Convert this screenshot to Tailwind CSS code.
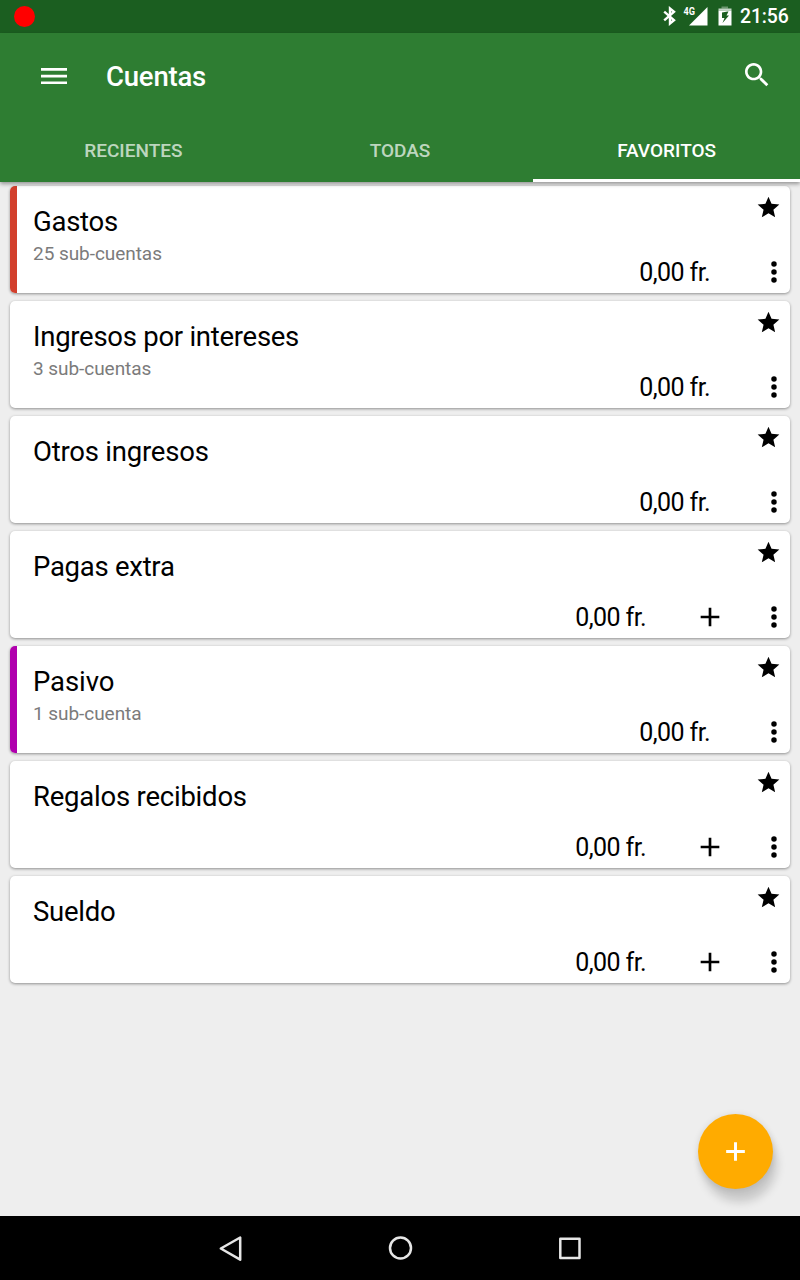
<!DOCTYPE html>
<html lang="es">
<head>
<meta charset="utf-8">
<title>Cuentas</title>
<script src="https://cdn.jsdelivr.net/npm/@tailwindcss/browser@4"></script>
</head>
<body class="w-[800px] h-[1280px] overflow-hidden bg-[#eeeeee] font-[Roboto,sans-serif] text-black">
<svg class="hidden">
  <symbol id="star" viewBox="-0.45 0.45 24 24"><path d="M12 17.27L18.18 21l-1.64-7.03L22 9.24l-7.19-.61L12 2 9.19 8.63 2 9.24l5.46 4.73L5.82 21z"/></symbol>
  <symbol id="more" viewBox="0 0 24 24"><circle cx="12" cy="6" r="2.05"/><circle cx="12" cy="12" r="2.05"/><circle cx="12" cy="18" r="2.05"/></symbol>
  <symbol id="plus" viewBox="0 0 24 24"><path d="M19 13h-6v6h-2v-6H5v-2h6V5h2v6h6z"/></symbol>
</svg>
<div class="flex flex-col h-full">
  <div class="h-[33px] shrink-0 bg-[#1b5e20] flex items-center justify-between pl-[13.5px] pr-[11px]">
    <div class="size-[21px] rounded-full bg-[#ff0000]"></div>
    <div class="flex items-center text-white">
      <svg class="w-[14px] h-[20px] mb-px" viewBox="0 0 14 20" fill="none" stroke="#fff" stroke-width="2.4"><path d="M1.200 5.700L11 14.200 7 17.500V2.500l4 3.300-9.800 8.500"/></svg>
      <svg class="w-[25px] h-[22px] ml-[6px] mb-px" viewBox="0 0 25 22"><path d="M24.500 2v18.500H6z" fill="#fff"/><text x="0.500" y="10.300" font-size="11" font-weight="700" textLength="11.500" lengthAdjust="spacingAndGlyphs" fill="#fff">4G</text></svg>
      <svg class="w-[14px] h-[20px] ml-[10px] mb-px" viewBox="0 0 14 20"><path d="M3.500 0.500h6.500v2h-6.500z" fill="#fff" opacity=".35"/><path d="M.5 2.500h13v2h-13z" fill="#fff" opacity=".75"/><path fill-rule="evenodd" d="M.5 4.500h13V19.500H.5zM9.500 5.500L4 6.500V12H6.500L4.500 17 11 9.500H8.500L10.500 5.500z" fill="#fff"/></svg>
      <span class="ml-[8px] text-[19.4px] leading-[22px] font-medium w-[49px] whitespace-nowrap pt-px tracking-[-0.1px]">21:56</span>
    </div>
  </div>
  <header class="relative z-10 h-[149px] shrink-0 bg-[#2e7d32] text-white shadow-[0_2px_4px_rgba(0,0,0,0.38)]">
    <div class="h-[85px] flex items-center pl-[41px] pr-[27px]">
      <svg class="w-[26px] h-[18px]" viewBox="0 0 26 18" fill="#fff"><path d="M0 1h26v2.700H0zM0 7.700h26v2.700H0zM0 14.400h26v2.700H0z"/></svg>
      <h1 class="ml-[39px] text-[27.5px] tracking-[-0.2px] leading-8 font-medium pt-[2px]">Cuentas</h1>
      <svg class="size-8 ml-auto mb-[2px]" viewBox="0 0 24 24" fill="#fff"><path d="M15.500 14h-.79l-.28-.27C15.410 12.590 16 11.110 16 9.500 16 5.910 13.090 3 9.500 3S3 5.910 3 9.500 5.910 16 9.500 16c1.610 0 3.090-.59 4.230-1.570l.27.28v.79l5 4.990L20.490 19l-4.990-5zm-6 0C7.010 14 5 11.990 5 9.500S7.010 5 9.500 5 14 7.010 14 9.500 11.990 14 9.500 14z"/></svg>
    </div>
    <nav class="h-[64px] grid grid-cols-3 text-center text-[19px] leading-[65px] font-medium">
      <div class="h-16 text-white/70">RECIENTES</div>
      <div class="h-16 text-white/70">TODAS</div>
      <div class="h-16 border-b-[3px] border-white">FAVORITOS</div>
    </nav>
  </header>
  <main class="flex-1 px-[10px] pt-[4px] flex flex-col gap-2">
    <article class="h-[107px] shrink-0 flex overflow-hidden rounded-[5px] bg-white shadow-[0_1px_3px_rgba(0,0,0,0.4)]">
      <div class="w-[7px] bg-[#d23f2c]"></div>
      <div class="pl-4 pt-5 flex-1"><h2 class="text-[27.5px] tracking-[-0.27px] leading-8">Gastos</h2><p class="text-[19px] tracking-[-0.05px] leading-8 text-[#7b7b7b]">25 sub-cuentas</p></div>
      <div class="flex flex-col justify-between items-end pt-[9px] pb-[4px]">
        <svg class="size-[26px] mr-[9px]"><use href="#star"/></svg>
        <div class="flex items-center"><span class="text-[25px] tracking-[-0.6px] leading-8 mr-12 pt-[2px]">0,00 fr.</span><svg class="size-8"><use href="#more"/></svg></div>
      </div>
    </article>
    <article class="h-[107px] shrink-0 flex overflow-hidden rounded-[5px] bg-white shadow-[0_1px_3px_rgba(0,0,0,0.4)]">
      <div class="w-[7px]"></div>
      <div class="pl-4 pt-5 flex-1"><h2 class="text-[27.5px] tracking-[-0.27px] leading-8">Ingresos por intereses</h2><p class="text-[19px] tracking-[-0.05px] leading-8 text-[#7b7b7b]">3 sub-cuentas</p></div>
      <div class="flex flex-col justify-between items-end pt-[9px] pb-[4px]">
        <svg class="size-[26px] mr-[9px]"><use href="#star"/></svg>
        <div class="flex items-center"><span class="text-[25px] tracking-[-0.6px] leading-8 mr-12 pt-[2px]">0,00 fr.</span><svg class="size-8"><use href="#more"/></svg></div>
      </div>
    </article>
    <article class="h-[107px] shrink-0 flex overflow-hidden rounded-[5px] bg-white shadow-[0_1px_3px_rgba(0,0,0,0.4)]">
      <div class="w-[7px]"></div>
      <div class="pl-4 pt-5 flex-1"><h2 class="text-[27.5px] tracking-[-0.22px] leading-8">Otros ingresos</h2></div>
      <div class="flex flex-col justify-between items-end pt-[9px] pb-[4px]">
        <svg class="size-[26px] mr-[9px]"><use href="#star"/></svg>
        <div class="flex items-center"><span class="text-[25px] tracking-[-0.6px] leading-8 mr-12 pt-[2px]">0,00 fr.</span><svg class="size-8"><use href="#more"/></svg></div>
      </div>
    </article>
    <article class="h-[107px] shrink-0 flex overflow-hidden rounded-[5px] bg-white shadow-[0_1px_3px_rgba(0,0,0,0.4)]">
      <div class="w-[7px]"></div>
      <div class="pl-4 pt-5 flex-1"><h2 class="text-[27.5px] tracking-[-0.27px] leading-8">Pagas extra</h2></div>
      <div class="flex flex-col justify-between items-end pt-[9px] pb-[4px]">
        <svg class="size-[26px] mr-[9px]"><use href="#star"/></svg>
        <div class="flex items-center"><span class="text-[25px] tracking-[-0.6px] leading-8 mr-12 pt-[2px]">0,00 fr.</span><svg class="size-8 mr-8"><use href="#plus"/></svg><svg class="size-8"><use href="#more"/></svg></div>
      </div>
    </article>
    <article class="h-[107px] shrink-0 flex overflow-hidden rounded-[5px] bg-white shadow-[0_1px_3px_rgba(0,0,0,0.4)]">
      <div class="w-[7px] bg-[#b000ad]"></div>
      <div class="pl-4 pt-5 flex-1"><h2 class="text-[27.5px] tracking-[-0.1px] leading-8">Pasivo</h2><p class="text-[19px] tracking-[-0.05px] leading-8 text-[#7b7b7b]">1 sub-cuenta</p></div>
      <div class="flex flex-col justify-between items-end pt-[9px] pb-[4px]">
        <svg class="size-[26px] mr-[9px]"><use href="#star"/></svg>
        <div class="flex items-center"><span class="text-[25px] tracking-[-0.6px] leading-8 mr-12 pt-[2px]">0,00 fr.</span><svg class="size-8"><use href="#more"/></svg></div>
      </div>
    </article>
    <article class="h-[107px] shrink-0 flex overflow-hidden rounded-[5px] bg-white shadow-[0_1px_3px_rgba(0,0,0,0.4)]">
      <div class="w-[7px]"></div>
      <div class="pl-4 pt-5 flex-1"><h2 class="text-[27.5px] tracking-[-0.22px] leading-8">Regalos recibidos</h2></div>
      <div class="flex flex-col justify-between items-end pt-[9px] pb-[4px]">
        <svg class="size-[26px] mr-[9px]"><use href="#star"/></svg>
        <div class="flex items-center"><span class="text-[25px] tracking-[-0.6px] leading-8 mr-12 pt-[2px]">0,00 fr.</span><svg class="size-8 mr-8"><use href="#plus"/></svg><svg class="size-8"><use href="#more"/></svg></div>
      </div>
    </article>
    <article class="h-[107px] shrink-0 flex overflow-hidden rounded-[5px] bg-white shadow-[0_1px_3px_rgba(0,0,0,0.4)]">
      <div class="w-[7px]"></div>
      <div class="pl-4 pt-5 flex-1"><h2 class="text-[27.5px] tracking-[-0.27px] leading-8">Sueldo</h2></div>
      <div class="flex flex-col justify-between items-end pt-[9px] pb-[4px]">
        <svg class="size-[26px] mr-[9px]"><use href="#star"/></svg>
        <div class="flex items-center"><span class="text-[25px] tracking-[-0.6px] leading-8 mr-12 pt-[2px]">0,00 fr.</span><svg class="size-8 mr-8"><use href="#plus"/></svg><svg class="size-8"><use href="#more"/></svg></div>
      </div>
    </article>
  </main>
  <button class="absolute left-[698px] top-[1114px] size-[75px] rounded-full bg-[#ffab00] flex items-center justify-center shadow-[4px_13px_10px_rgba(0,0,0,0.16),0_1px_7px_rgba(0,0,0,0.12)]">
    <svg class="size-[33px]" viewBox="-0.375 -0.375 24.750 24.750" fill="#fff"><path d="M19 13.100h-5.900v5.900h-2.200v-5.900H5v-2.200h5.900V5h2.200v5.900H19z"/></svg>
  </button>
  <footer class="relative h-16 shrink-0 bg-black flex items-center justify-center">
    <svg class="w-[364px] h-[64px]" viewBox="218 1216 364 64" fill="none" stroke="#e6e6e6" stroke-width="2.500" stroke-linejoin="round"><path d="M220.800 1248.500L240.200 1237.500V1259.700z"/><circle cx="400.500" cy="1248" r="10.500"/><rect x="560.300" y="1238.800" width="19.200" height="19.200"/></svg>
  </footer>
</div>
</body>
</html>
